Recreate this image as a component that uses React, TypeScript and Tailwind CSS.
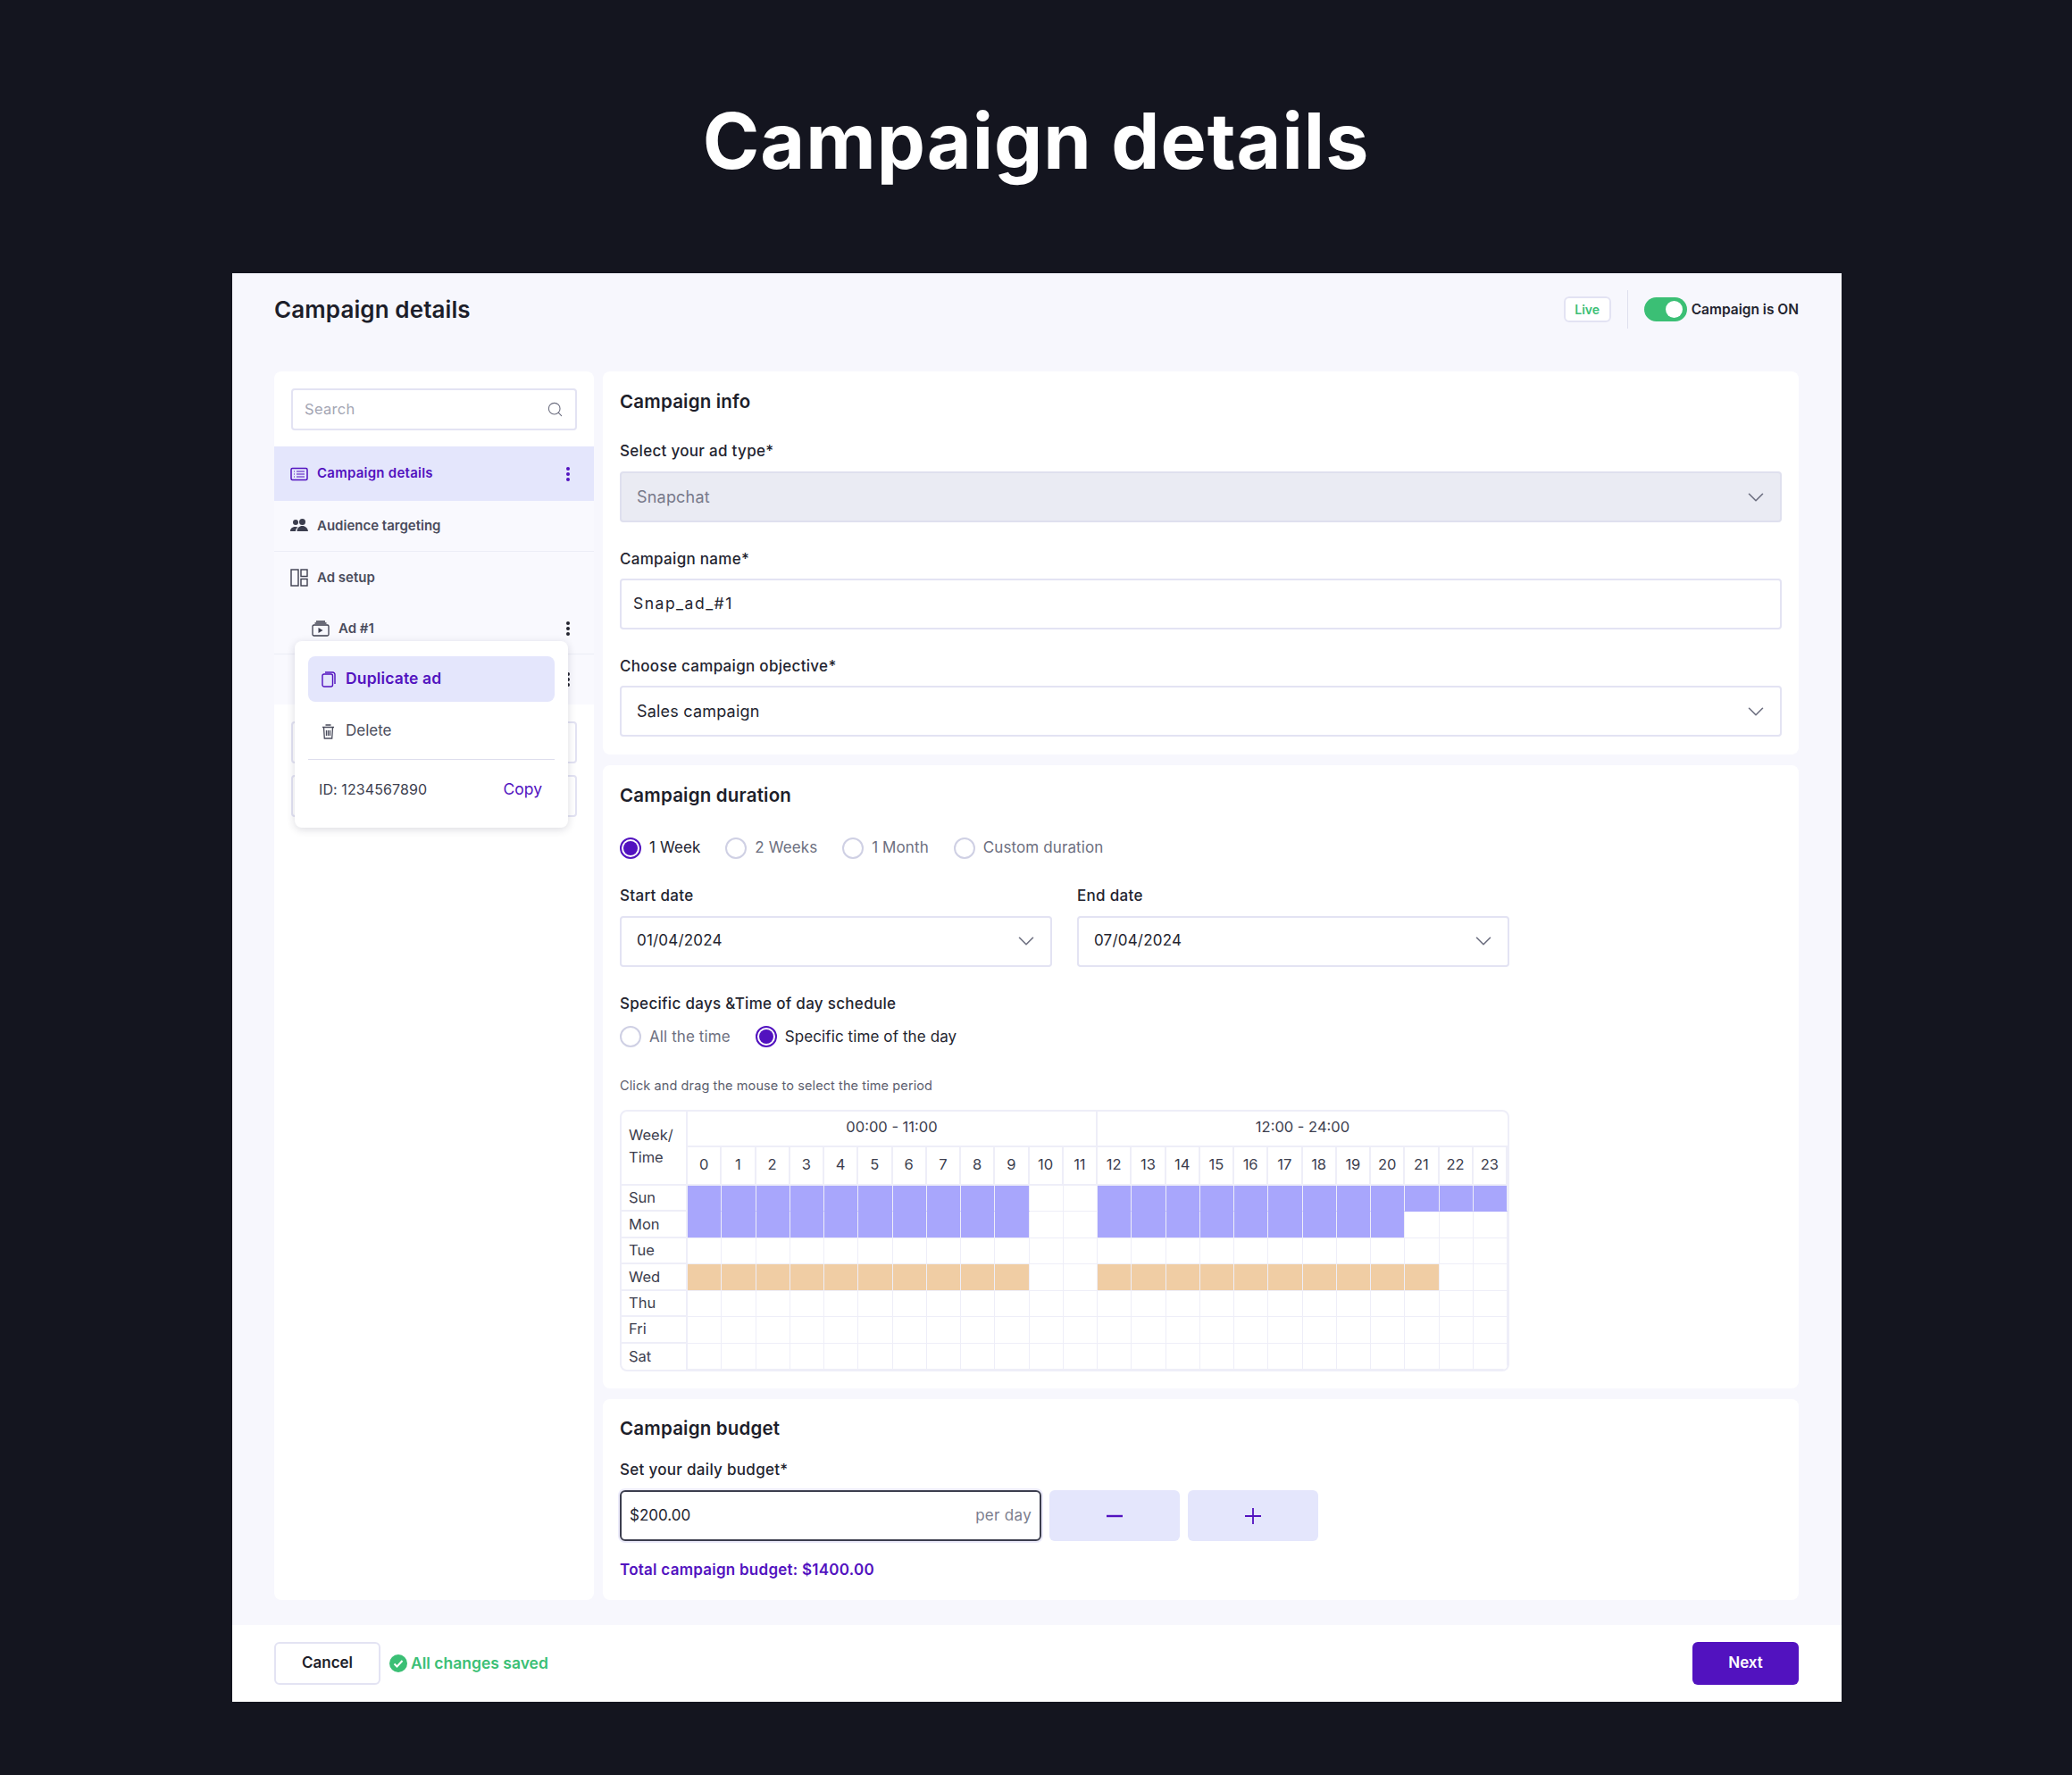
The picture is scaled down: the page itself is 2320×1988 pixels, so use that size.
import React from "react";
import { ChevronDown, Search } from "lucide-react";

const font = "font-['Inter','Liberation_Sans',sans-serif]";

function Kebab({ className }: { className: string }) {
  return (
    <svg width="6" height="18" viewBox="0 0 6 18" className={className} fill="currentColor">
      <circle cx="3" cy="3" r="2" />
      <circle cx="3" cy="9" r="2" />
      <circle cx="3" cy="15" r="2" />
    </svg>
  );
}

function Radio({ on, label }: { on?: boolean; label: string }) {
  return (
    <div className="flex items-center gap-[9px]">
      {on ? (
        <span className="flex h-6 w-6 items-center justify-center rounded-full border-2 border-[#5212bf] bg-white">
          <span className="h-4 w-4 rounded-full bg-[#5212bf]" />
        </span>
      ) : (
        <span className="h-6 w-6 rounded-full border-2 border-[#cfd0e4] bg-white" />
      )}
      <span className={`text-[17px] tracking-[0.1px] ${on ? "text-[#23242f]" : "text-[#6d6f80]"}`}>{label}</span>
    </div>
  );
}

function Label({ children, className = "" }: { children: React.ReactNode; className?: string }) {
  return <div className={`text-[17px] leading-[22px] font-medium tracking-[0.3px] text-[#23242f] ${className}`}>{children}</div>;
}

function Heading({ children }: { children: React.ReactNode }) {
  return <div className="text-[20.500px] leading-[26px] font-semibold tracking-[0.2px] text-[#1d1e2a]">{children}</div>;
}

function SelectBox({ value, disabled, large, className = "" }: { value: string; disabled?: boolean; large?: boolean; className?: string }) {
  return (
    <div
      className={`flex h-[57px] items-center justify-between rounded border-2 pl-[17px] pr-[12px] ${large ? "text-[18px]" : "text-[17px]"} ${
        disabled ? "border-[#dfe0ee] bg-[#eaebf3] text-[#77798a]" : "border-[#e3e3f3] bg-white text-[#23242f]"
      } ${className}`}
    >
      <span className="tracking-[0.2px]">{value}</span>
      <ChevronDown size={30} strokeWidth={1.3} className="text-[#6d6f80]" />
    </div>
  );
}

function CampaignIcon() {
  return (
    <svg width="20" height="16" viewBox="0 0 20 16" fill="none" stroke="#5212bf" strokeWidth="1.5">
      <rect x="1" y="1.5" width="18" height="13" rx="1.5" />
      <path d="M4 5h1M7 5h9M4 8h1M7 8h9M4 11h1M7 11h9" strokeWidth="1.2" />
    </svg>
  );
}

function PeopleIcon() {
  return (
    <svg width="20" height="16" viewBox="0 0 20 16" fill="#3c3e4e">
      <circle cx="6" cy="4" r="3" />
      <circle cx="13.5" cy="3.5" r="3.5" />
      <path d="M0 14c0-3.5 2.5-5 6-5 1 0 2 .2 2.6.5C6.8 10.6 6 12.2 6 14H0z" />
      <path d="M7.5 14c0-3.5 2.6-6 6-6s6 2.5 6.500 6h-12.500z" />
    </svg>
  );
}

function LayoutIcon() {
  return (
    <svg width="20" height="20" viewBox="0 0 20 20" fill="none" stroke="#3c3e4e" strokeWidth="1.4">
      <rect x="1" y="1" width="8" height="18" />
      <rect x="12" y="1" width="7" height="7.500" />
      <rect x="12" y="11.500" width="7" height="7.500" />
    </svg>
  );
}

function AdIcon() {
  return (
    <svg width="20" height="18" viewBox="0 0 20 18" fill="none" stroke="#3c3e4e" strokeWidth="1.3">
      <rect x="1" y="5" width="18" height="12" rx="1.500" />
      <path d="M3.500 3h13M5 1h10" />
      <path d="M7.500 8l5 3-5 3z" fill="#3c3e4e" stroke="none" />
    </svg>
  );
}

function CopyIcon() {
  return (
    <svg width="16" height="18" viewBox="0 0 16 18" fill="none" stroke="#5212bf" strokeWidth="1.400">
      <rect x="1" y="3" width="11.500" height="14" rx="2" />
      <path d="M4 1h8.500A2.500 2.500 0 0 1 15 3.500V14" />
    </svg>
  );
}

function TrashIcon() {
  return (
    <svg width="15" height="17" viewBox="0 0 15 17" fill="none" stroke="#4a4c5c" strokeWidth="1.300">
      <path d="M1 3.500h13M4.500 1h6M2.500 3.500l.8 12.500h8.400l.8-12.500M5.500 7v6M7.500 7v6M9.500 7v6" />
    </svg>
  );
}

const Sidebar = () => (
  <div className="relative w-[358px] shrink-0 rounded-lg bg-white">
    <div className="px-[19px] pt-[19px] pb-[18px]">
      <div className="flex h-[47px] items-center justify-between rounded border-2 border-[#e3e3f3] pl-[13px] pr-[13px] text-[16.500px] text-[#a3a5b3]">
        <span className="tracking-[0.3px]">Search</span>
        <Search size={19} strokeWidth={1.4} className="text-[#6d6f80]" />
      </div>
    </div>
    <div className="flex h-[61px] items-center bg-[#e4e6fc] pl-[18px] pr-[26px]">
      <CampaignIcon />
      <span className="ml-[10px] flex-1 text-[15px] font-semibold tracking-[0.25px] text-[#5212bf]">Campaign details</span>
      <Kebab className="text-[#5212bf]" />
    </div>
    <div className="bg-[#f9f9fe] text-[15px] font-semibold text-[#4a4c5c]">
      <div className="flex h-[57px] items-center border-b border-[#ecedf6] pl-[18px]">
        <PeopleIcon />
        <span className="ml-[10px]">Audience targeting</span>
      </div>
      <div className="flex h-[58px] items-center pl-[18px]">
        <LayoutIcon />
        <span className="ml-[10px]">Ad setup</span>
      </div>
      <div className="flex h-[57px] items-center border-b border-[#ecedf6] pl-[42px] pr-[26px]">
        <AdIcon />
        <span className="ml-[10px] flex-1">Ad #1</span>
        <Kebab className="text-[#23242f]" />
      </div>
      <div className="flex h-[56px] items-center justify-end pr-[26px]">
        <Kebab className="text-[#23242f]" />
      </div>
    </div>
    <div className="flex flex-col gap-[13px] px-[19px] pt-[19px]">
      <div className="h-[47px] rounded border-2 border-[#e3e3f3]" />
      <div className="h-[47px] rounded border-2 border-[#e3e3f3]" />
    </div>
    <div className="absolute top-[302px] left-[23px] flex h-[209px] w-[306px] flex-col rounded-lg bg-white px-[15px] pt-[17px] shadow-[0_2px_10px_rgba(30,30,60,0.16)]">
      <div className="flex h-[51px] items-center rounded-lg bg-[#e4e6fc] pl-[15px] text-[17.500px] font-semibold tracking-[0.15px] text-[#5212bf]">
        <CopyIcon />
        <span className="ml-[11px]">Duplicate ad</span>
      </div>
      <div className="flex h-[65px] items-center border-b border-[#dcdcec] pt-[2px] pl-[15px] text-[17px] text-[#4a4c5c]">
        <TrashIcon />
        <span className="ml-[12px]">Delete</span>
      </div>
      <div className="flex h-[66px] items-center justify-between pl-[12px] pr-[14px]">
        <span className="text-[16px] tracking-[0.1px] text-[#3c3e4e]">ID: 1234567890</span>
        <span className="text-[17.500px] text-[#5212bf]">Copy</span>
      </div>
    </div>
  </div>
);

const hours = Array.from({ length: 24 }, (_, i) => i);
const days = ["Sun", "Mon", "Tue", "Wed", "Thu", "Fri", "Sat"];

function cellColor(day: number, h: number) {
  const main = h <= 9 || (h >= 12 && h <= 20);
  if (day === 0 && (main || h >= 21)) return "bg-[#a8a6fc] border-b-[#a8a6fc]";
  if (day === 1 && main) return "bg-[#a8a6fc]";
  if (day === 3 && (main || h === 21)) return "bg-[#f0cda4]";
  return "bg-white";
}

const Schedule = () => (
  <div className="grid h-[293px] grid-cols-[74px_repeat(24,minmax(0,1fr))] grid-rows-[40px_43px_repeat(7,minmax(0,1fr))] overflow-hidden rounded-lg border-2 border-[#eeeef8] text-[16.500px] text-[#3c3e4e]">
    <div className="col-start-1 row-span-2 row-start-1 border-r-2 border-b-2 border-[#eeeef8] pt-[14px] pl-[8px] leading-[25px]">
      Week/
      <br />
      Time
    </div>
    <div className="col-span-12 col-start-2 row-start-1 flex items-center justify-center border-r-2 border-b-2 border-[#eeeef8] pb-[3px]">00:00 - 11:00</div>
    <div className="col-span-12 col-start-14 row-start-1 flex items-center justify-center border-b-2 border-[#eeeef8] pb-[3px]">12:00 - 24:00</div>
    {hours.map((h) => (
      <div key={h} className="flex items-center justify-center border-r-2 border-b-2 border-[#eeeef8] pb-[2px] last:border-r-0">
        {h}
      </div>
    ))}
    {days.map((d, di) => (
      <React.Fragment key={d}>
        <div className={`flex items-center border-r-2 border-[#eeeef8] pl-[8px] ${di < 6 ? "border-b-2" : ""}`}>{d}</div>
        {hours.map((h) => (
          <div key={h} className={`border-r border-b border-[#eeeef8] ${cellColor(di, h)}`} />
        ))}
      </React.Fragment>
    ))}
  </div>
);

const Main = () => (
  <div className="flex flex-1 flex-col gap-[12px]">
    <section className="h-[429px] rounded-lg bg-white px-[19px] pt-[21px]">
      <Heading>Campaign info</Heading>
      <Label className="mt-[31px]">Select your ad type*</Label>
      <SelectBox value="Snapchat" disabled large className="mt-[12px]" />
      <Label className="mt-[30px]">Campaign name*</Label>
      <div className="mt-[11px] flex h-[57px] items-center rounded border-2 border-[#e3e3f3] pl-[13px] text-[17.500px] tracking-[1.500px] text-[#23242f]">Snap_ad_#1</div>
      <Label className="mt-[30px]">Choose campaign objective*</Label>
      <SelectBox value="Sales campaign" large className="mt-[11px]" />
    </section>

    <section className="h-[698px] rounded-lg bg-white px-[19px] pt-[21px]">
      <Heading>Campaign duration</Heading>
      <div className="mt-[33px] flex items-center gap-[28px]">
        <Radio on label="1 Week" />
        <Radio label="2 Weeks" />
        <Radio label="1 Month" />
        <Radio label="Custom duration" />
      </div>
      <div className="w-[996px]">
        <div className="mt-[29px] grid grid-cols-[484px_484px] gap-x-[28px]">
          <div>
            <Label>Start date</Label>
            <SelectBox value="01/04/2024" className="mt-[12px]" />
          </div>
          <div>
            <Label>End date</Label>
            <SelectBox value="07/04/2024" className="mt-[12px]" />
          </div>
        </div>
        <Label className="mt-[30px]">Specific days &amp;Time of day schedule</Label>
        <div className="mt-[14px] flex items-center gap-[28px]">
          <Radio label="All the time" />
          <Radio on label="Specific time of the day" />
        </div>
        <div className="mt-[32px] text-[14.500px] leading-[20px] tracking-[0.1px] text-[#5c5e6e]">Click and drag the mouse to select the time period</div>
        <div className="mt-[17px]">
          <Schedule />
        </div>
      </div>
    </section>

    <section className="flex-1 rounded-lg bg-white px-[19px] pt-[20px]">
      <Heading>Campaign budget</Heading>
      <Label className="mt-[22px]">Set your daily budget*</Label>
      <div className="mt-[12px] flex items-center gap-[9px]">
        <div className="flex h-[57px] w-[472px] items-center justify-between rounded-md border-2 border-[#3c3e4e] px-[9px] text-[17px] shadow-[0_0_0_2px_#ecebfb]">
          <span className="text-[#23242f]">$200.00</span>
          <span className="tracking-[0.3px] text-[#7c7e8e]">per day</span>
        </div>
        <div className="flex h-[57px] w-[146px] items-center justify-center rounded-md bg-[#e4e6fc]">
          <svg width="18" height="18" viewBox="0 0 18 18" stroke="#5212bf" strokeWidth="2.400"><path d="M0 9h18" /></svg>
        </div>
        <div className="flex h-[57px] w-[146px] items-center justify-center rounded-md bg-[#e4e6fc]">
          <svg width="18" height="18" viewBox="0 0 18 18" stroke="#5212bf" strokeWidth="1.800"><path d="M0 9h18M9 0v18" /></svg>
        </div>
      </div>
      <div className="mt-[20px] text-[17px] font-semibold tracking-[0.25px] text-[#5212bf]">Total campaign budget: $1400.00</div>
    </section>
  </div>
);

export default function App() {
  return (
    <div className={`${font} min-h-[1988px] bg-[#14151f] pt-[115px]`}>
      <h1 className="text-center text-[86px] leading-[86px] font-bold tracking-[1px] text-white">Campaign details</h1>
      <div className="mt-[105px] ml-[260px] w-[1802px] bg-[#f7f7fd]">
        <div className="flex h-[110px] items-start justify-between pl-[47px] pr-[48px] pt-[19px]">
          <div className="pt-[6px] text-[26px] leading-[32px] font-semibold tracking-[0.1px] text-[#1d1e2a]">Campaign details</div>
          <div className="flex items-center">
            <span className="flex h-[29px] w-[53px] items-center justify-center rounded-md border-2 border-[#e3e3f3] bg-white text-[14px] font-semibold text-[#3bbf75]">Live</span>
            <span className="mx-[18px] h-[43px] w-px bg-[#dfe0ee]" />
            <span className="flex h-[27px] w-[48px] items-center justify-end rounded-full bg-[#3bbf75] pr-[5px]">
              <span className="h-[19px] w-[19px] rounded-full bg-white" />
            </span>
            <span className="ml-[5px] text-[15.500px] font-semibold text-[#23242f]">Campaign is ON</span>
          </div>
        </div>
        <div className="flex h-[1376px] gap-[10px] pl-[47px] pr-[48px]">
          <Sidebar />
          <Main />
        </div>
        <div className="mt-[28px] flex h-[86px] items-center justify-between bg-white pl-[47px] pr-[48px]">
          <div className="flex items-center">
            <div className="flex h-[48px] w-[119px] items-center justify-center rounded-md border-2 border-[#e3e3f3] bg-white text-[17px] font-semibold text-[#1d1e2a]">Cancel</div>
            <svg width="20" height="20" viewBox="0 0 20 20" className="ml-[10px]">
              <circle cx="10" cy="10" r="10" fill="#3bbf75" />
              <path d="M5.500 10.500l3 3 6-6.500" fill="none" stroke="white" strokeWidth="2" />
            </svg>
            <span className="ml-[4px] text-[17.500px] font-semibold text-[#3bbf75]">All changes saved</span>
          </div>
          <div className="flex h-[48px] w-[119px] items-center justify-center rounded-md bg-[#5212bf] text-[17px] font-semibold text-white">Next</div>
        </div>
      </div>
    </div>
  );
}
